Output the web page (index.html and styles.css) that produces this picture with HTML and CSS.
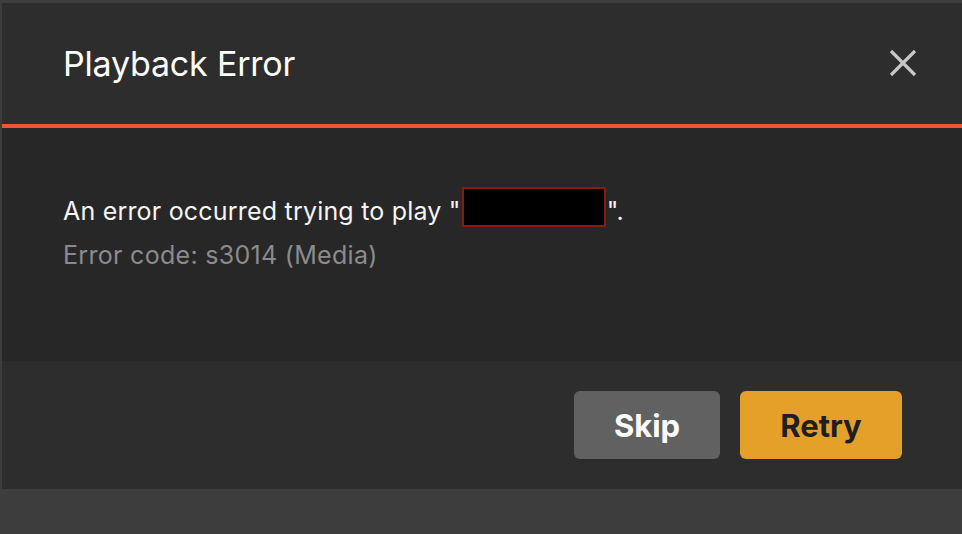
FILE: index.html
```html
<!DOCTYPE html>
<html>
<head>
<meta charset="utf-8">
<link rel="stylesheet" href="styles.css">
</head>
<body>
<div class="dialog">
  <div class="header">
    <h1 class="title">Playback Error</h1>
    <button class="close" aria-label="Close">
      <svg width="28" height="28" viewBox="0 0 28 28"><path d="M2 2 L26 26 M26 2 L2 26" stroke="#c7c7c7" stroke-width="3.2" stroke-linecap="butt"/></svg>
    </button>
  </div>
  <div class="content">
    <p class="msg">An error occurred trying to play "<span class="redact"></span>".</p>
    <p class="code">Error code: s3014 (Media)</p>
  </div>
  <div class="footer">
    <button class="btn skip">Skip</button>
    <button class="btn retry">Retry</button>
  </div>
</div>
</body>
</html>
```

FILE: styles.css
```css
html, body {
  margin: 0;
  padding: 0;
}
body {
  background: #3d3d3d;
  width: 962px;
  height: 534px;
  padding: 3px 0 0 2px;
  box-sizing: border-box;
  font-family: "Inter", "Helvetica Neue", sans-serif;
  overflow: hidden;
}
.dialog {
  width: 960px;
  display: flex;
  flex-direction: column;
}
.header {
  height: 121px;
  background: #2d2d2d;
  border-bottom: 4px solid #f0533a;
  display: flex;
  align-items: center;
  justify-content: space-between;
  padding: 0 45px 0 61px;
}
.title {
  margin: 0;
  color: #ffffff;
  font-size: 34px;
  font-weight: 400;
  letter-spacing: -0.2px;
}
.close {
  background: none;
  border: 0;
  padding: 0;
  width: 28px;
  height: 28px;
  margin-bottom: 2px;
  display: flex;
}
.content {
  height: 233px;
  background: #272727;
  padding: 59px 61px 0;
  box-sizing: border-box;
}
.msg {
  margin: 0;
  color: #f5f5f5;
  font-size: 25px;
  letter-spacing: 0.2px;
  line-height: 40px;
}
.redact {
  display: inline-block;
  width: 144px;
  height: 40px;
  box-sizing: border-box;
  background: #000;
  border: 2px solid #8a1a0c;
  margin: 0 1px 0 1px;
  vertical-align: -7px;
}
.code {
  margin: 10px 0 0;
  color: #8b8b8b;
  font-size: 25px;
  letter-spacing: 0.3px;
  line-height: 28px;
}
.footer {
  height: 128px;
  background: #2d2d2d;
  display: flex;
  justify-content: flex-end;
  align-items: center;
  gap: 20px;
  padding-right: 60px;
}
.btn {
  height: 68px;
  border: 0;
  border-radius: 6px;
  font-family: "Inter", "Helvetica Neue", sans-serif;
  font-weight: 700;
  font-size: 31px;
  padding: 0;
}
.skip {
  width: 146px;
  background: #616161;
  color: #ffffff;
}
.retry {
  width: 162px;
  background: #e5a02a;
  color: #1f1f1f;
}
```
